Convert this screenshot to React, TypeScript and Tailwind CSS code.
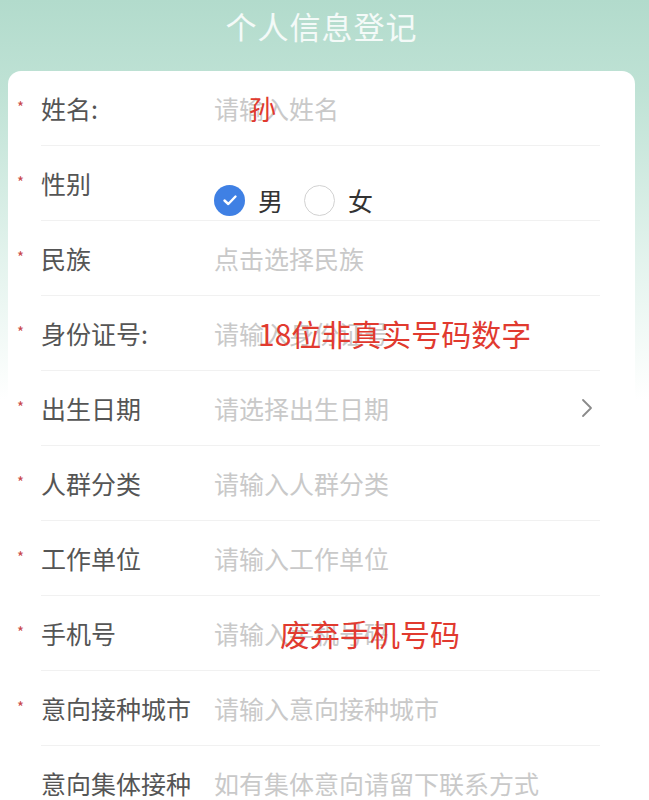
import React from "react";

type Row = {
  label: string;
  placeholder: string;
  required?: boolean;
  chevron?: boolean;
  note?: { text: string; left: number; size: number };
};

const rows: Row[] = [
  { label: "姓名:", placeholder: "请输入姓名", required: true, note: { text: "孙", left: 35, size: 27 } },
  { label: "性别", placeholder: "", required: true },
  { label: "民族", placeholder: "点击选择民族", required: true },
  { label: "身份证号:", placeholder: "请输入身份证号", required: true, note: { text: "18位非真实号码数字", left: 44, size: 30 } },
  { label: "出生日期", placeholder: "请选择出生日期", required: true, chevron: true },
  { label: "人群分类", placeholder: "请输入人群分类", required: true },
  { label: "工作单位", placeholder: "请输入工作单位", required: true },
  { label: "手机号", placeholder: "请输入手机号码", required: true, note: { text: "废弃手机号码", left: 66, size: 30 } },
  { label: "意向接种城市", placeholder: "请输入意向接种城市", required: true },
  { label: "意向集体接种", placeholder: "如有集体意向请留下联系方式" },
];

function Gender() {
  return (
    <div className="self-start mt-[38px] h-[32px] flex items-center">
      <span className="w-[31px] h-[31px] rounded-full bg-[#3f80e4] flex items-center justify-center">
        <svg width="18" height="18" viewBox="0 0 18 18" fill="none">
          <path d="M3.5 9.5 L7.3 13 L14.5 5.5" stroke="#ffffff" strokeWidth="2.4" strokeLinecap="round" strokeLinejoin="round" />
        </svg>
      </span>
      <span className="ml-[13px] text-[25px] leading-none text-[#333333]">男</span>
      <span className="ml-[21px] w-[31px] h-[31px] rounded-full border-[1.5px] border-[#d2d2d2] bg-white" />
      <span className="ml-[13px] text-[25px] leading-none text-[#333333]">女</span>
    </div>
  );
}

export default function App() {
  return (
    <div
      className="w-[649px] h-[800px] overflow-hidden bg-[linear-gradient(to_bottom,#b2dbcc_0px,#bfe2d5_90px,#e3f3ed_260px,#ffffff_400px)]"
      style={{ fontFamily: '"Noto Sans CJK SC", "Noto Sans", sans-serif' }}
    >
      <div className="h-[50px] flex items-center justify-center pr-[6px]">
        <span className="text-[31px] leading-none text-white/85 tracking-[1px]">个人信息登记</span>
      </div>
      <div className="mt-[21px] ml-[8px] w-[627px] rounded-t-[13px] bg-white">
        {rows.map((r, i) => (
          <div key={i} className="flex">
            <div className="w-[33px] h-[75px] flex items-center pl-[9px]">
              {r.required && <span className="text-[15px] leading-none text-[#c9474a] mt-[-4px]">*</span>}
            </div>
            <div className="flex-1 mr-[35px] h-[75px] border-b border-[#f1f1f1] flex items-center">
              <span className="w-[173px] shrink-0 text-[25px] leading-none text-[#555555] whitespace-nowrap">{r.label}</span>
              {r.label === "性别" ? (
                <Gender />
              ) : (
                <div className="relative flex-1 flex items-center">
                  <span className="text-[25px] leading-none text-[#c9c9c9] whitespace-nowrap">{r.placeholder}</span>
                  {r.note && (
                    <span
                      className={
                        "absolute top-1/2 -translate-y-1/2 leading-none text-[#e13a2f] whitespace-nowrap " +
                        (r.note.size === 27 ? "text-[27px]" : "text-[30px]")
                      }
                      style={{ left: r.note.left }}
                    >
                      {r.note.text}
                    </span>
                  )}
                  {r.chevron && (
                    <svg className="ml-auto mr-[6px]" width="14" height="20" viewBox="0 0 14 20" fill="none">
                      <path d="M3 2 L11 10 L3 18" stroke="#8a8a8a" strokeWidth="1.8" strokeLinecap="round" strokeLinejoin="round" />
                    </svg>
                  )}
                </div>
              )}
            </div>
          </div>
        ))}
      </div>
    </div>
  );
}
